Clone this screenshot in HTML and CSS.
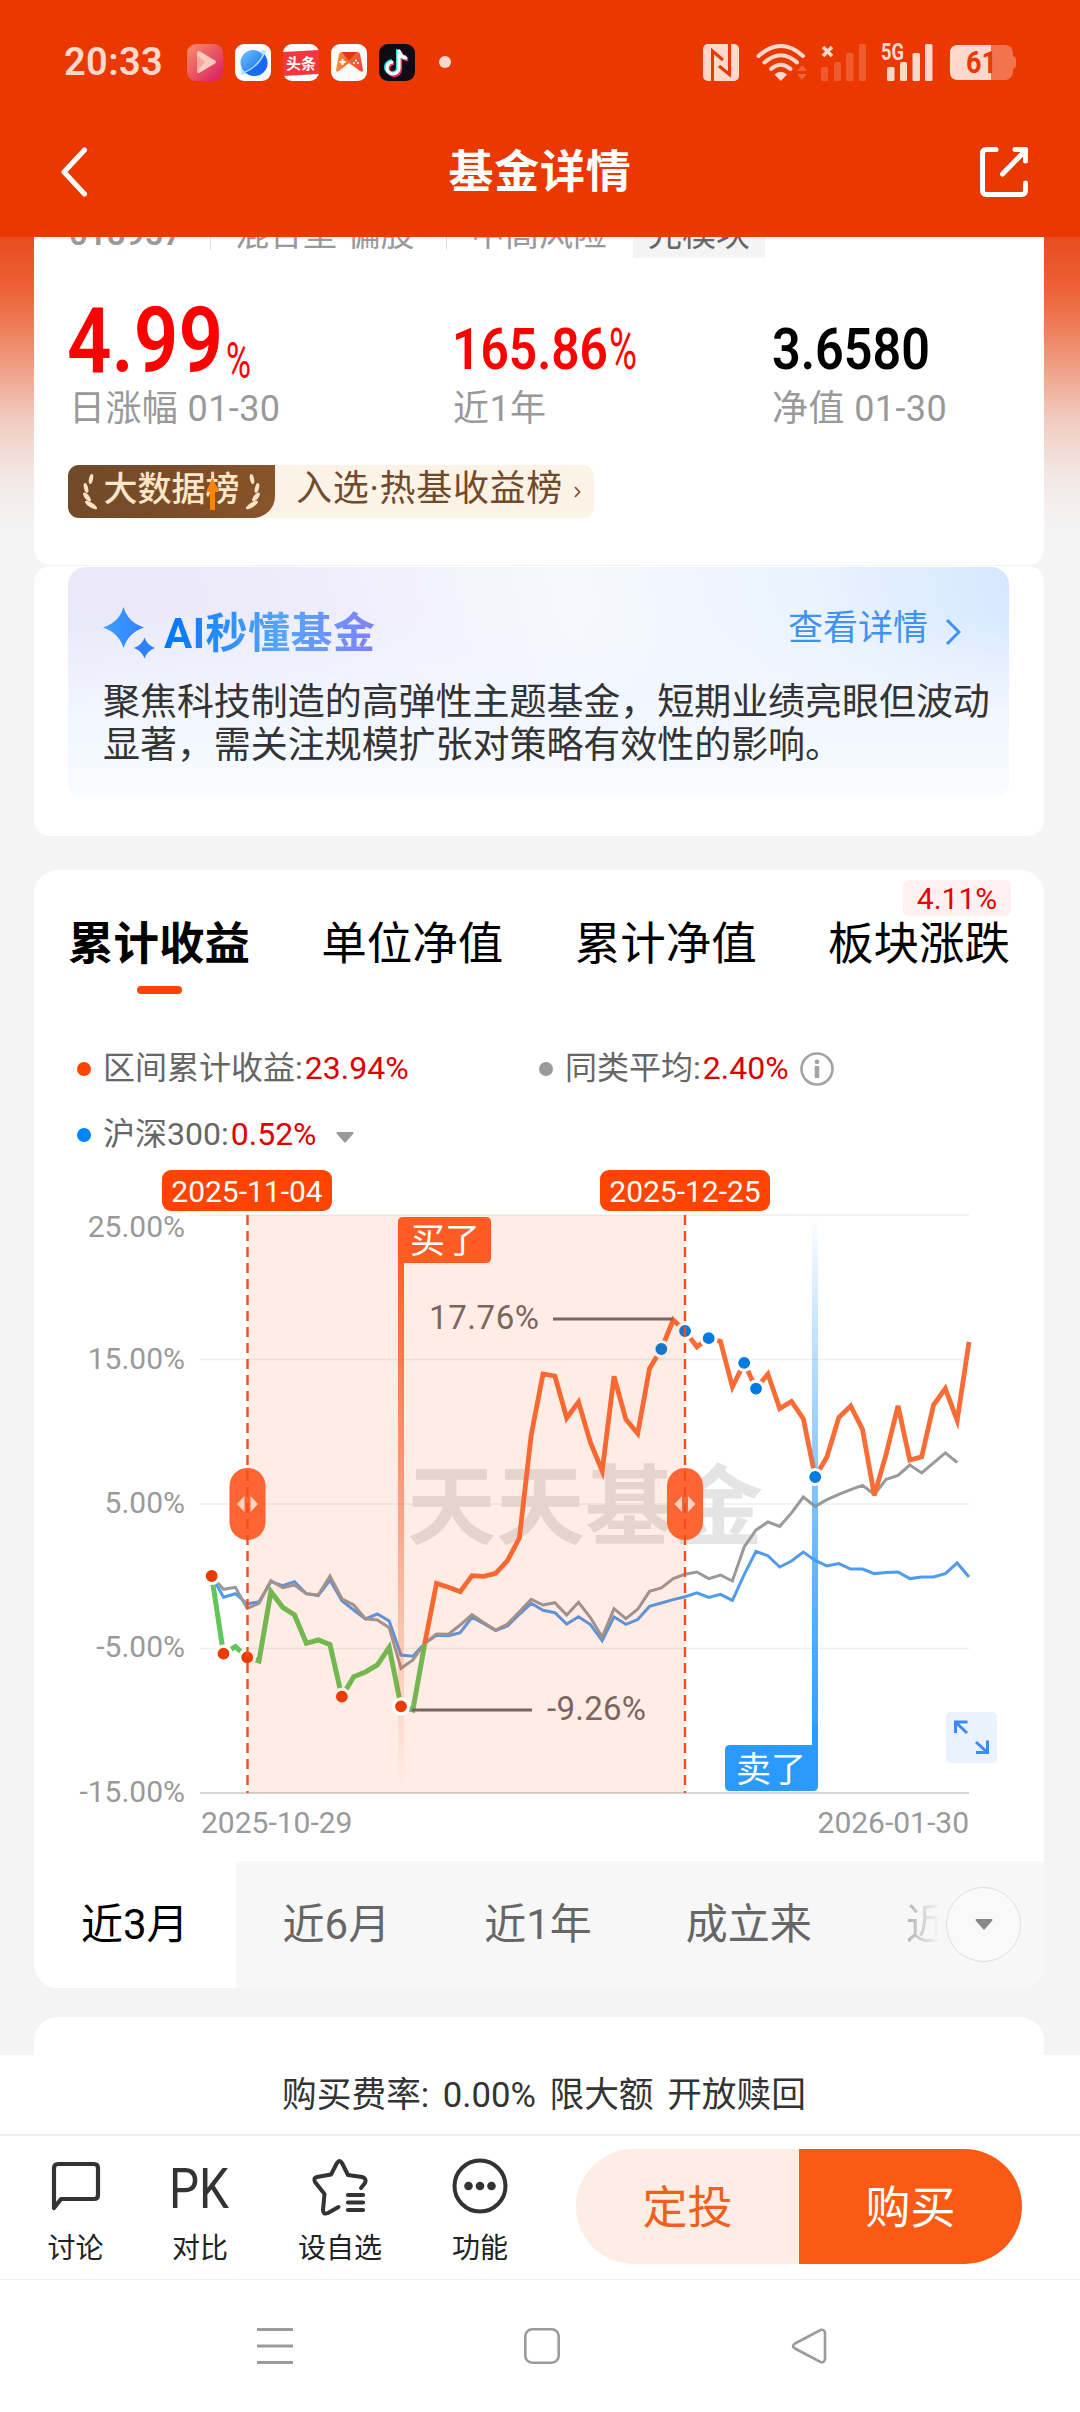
FILE: index.html
```html
<!DOCTYPE html>
<html lang="zh-CN">
<head>
  <meta charset="utf-8">
  <title>基金详情</title>
  <link rel="stylesheet" href="styles.css">
</head>
<body>
  <!-- Status bar + page title -->
  <header class="header">
    <div class="status-bar">
      <span class="clock">20:33</span>
      <div class="app-icons">
        <svg width="36" height="37" viewBox="0 0 36 37">
          <defs><linearGradient id="g-play" x1="0" y1="0" x2="1" y2="1"><stop offset="0" stop-color="#fb8f66"/><stop offset="1" stop-color="#d81b60"/></linearGradient></defs>
          <rect width="36" height="37" rx="9" fill="url(#g-play)"/>
          <path d="M10 9q0-3 3-1.500l15 9q2 1.500 0 3l-15 9q-3 1.500-3-1.500z" fill="#ffc9bd"/>
          <path d="M10 11l8 7-8 10z" fill="#f9a99c"/>
        </svg>
        <svg width="36" height="37" viewBox="0 0 36 37">
          <defs><linearGradient id="g-globe" x1="0" y1="0" x2="1" y2="1"><stop offset="0" stop-color="#6cc4ff"/><stop offset="1" stop-color="#0a63f0"/></linearGradient></defs>
          <rect width="36" height="37" rx="9" fill="#fafcff"/>
          <path d="M24 8q7-4 7 0-1 8-9 15T8 31q-3 0-2-6z" fill="#bfe2fd"/>
          <circle cx="18" cy="18.500" r="12.500" fill="url(#g-globe)"/>
          <path d="M8 29Q22 24 29 10A12.500 12.500 0 0 1 10 28z" fill="#1769f2"/>
          <path d="M8 29Q22 24 29 10" fill="none" stroke="#a8dcff" stroke-width="1.500"/>
        </svg>
        <svg width="36" height="37" viewBox="0 0 36 37">
          <rect width="36" height="37" rx="9" fill="#fff"/>
          <path d="M0 8l36-2v24l-36 2z" fill="#f7353b"/>
          <text x="18" y="25" class="toutiao" text-anchor="middle">头条</text>
        </svg>
        <svg width="36" height="37" viewBox="0 0 36 37">
          <defs><linearGradient id="g-game" x1="0" y1="0" x2="1" y2="0"><stop offset="0" stop-color="#ff8c32"/><stop offset="1" stop-color="#f0473c"/></linearGradient></defs>
          <rect width="36" height="37" rx="9" fill="#fafafa"/>
          <path d="M8 10q1-2 3-2h15q2 0 3 2l3 16q0 3-3 1l-11-8-10 8q-3 2-3-1z" fill="url(#g-game)"/>
          <path d="M11 8h15l-8 9z" fill="#dc3a0c"/>
          <path d="M8.500 18h6M11.500 15v6" stroke="#fff" stroke-width="2"/>
          <circle cx="23" cy="19" r="1" fill="#fff"/><circle cx="27" cy="19" r="1" fill="#fff"/><circle cx="25" cy="16.500" r="1" fill="#fff"/>
        </svg>
        <svg width="36" height="37" viewBox="0 0 36 37">
          <rect width="36" height="37" rx="9" fill="#0d0b16"/>
          <g fill="none" stroke-width="4">
            <path d="M20 6v18a6 6 0 1 1-6-6M20 7q2 7 8 7" stroke="#f5325c" transform="translate(1.200 1.200)"/>
            <path d="M20 6v18a6 6 0 1 1-6-6M20 7q2 7 8 7" stroke="#27e5e5" transform="translate(-1 -.8)"/>
            <path d="M20 6v18a6 6 0 1 1-6-6M20 7q2 7 8 7" stroke="#fff" stroke-width="3.200"/>
          </g>
        </svg>
      </div>
      <span class="more-dot"></span>

      <div class="status-right">
        <svg width="36" height="37" viewBox="0 0 36 37">
          <rect width="36" height="37" rx="5" fill="#fed8cc"/>
          <path d="M9.500 38V7L20 16M26.500 -1V30.500L16 22" fill="none" stroke="#ea3800" stroke-width="3"/>
        </svg>
        <svg class="wifi" width="51" height="37" viewBox="0 0 51 37">
          <g fill="none" stroke="#fed8cc" stroke-width="4" stroke-linecap="round">
            <path d="M2.500 12Q25 -8 47 12"/><path d="M8.500 18.500Q25 4 41 18.500"/><path d="M15 25Q25 16.500 34.500 25"/>
          </g>
          <path d="M18.500 30.500Q24.500 25 31 30.500L24.800 37z" fill="#fed8cc"/>
          <path d="M46 21l5 6H41zM46 36l5-6H41z" fill="#f0633c"/>
        </svg>
        <svg class="sig-one" width="46" height="37" viewBox="0 0 46 37">
          <path d="M2 3l9 9M11 3l-9 9" stroke="#fed8cc" stroke-width="3.500"/>
          <g fill="#ef5b30"><rect y="23" width="7" height="14" rx="1.500"/><rect x="13" y="18" width="7" height="19" rx="1.500"/><rect x="25" y="9" width="7.500" height="28" rx="1.500"/><rect x="38" width="7" height="37" rx="1.500"/></g>
        </svg>
        <svg class="sig-two" width="52" height="38" viewBox="0 0 52 38">
          <text x="0" y="17" class="five-g" textLength="23" lengthAdjust="spacingAndGlyphs">5G</text>
          <g fill="#fed8cc"><rect x="6" y="24" width="7.500" height="14" rx="1.500"/><rect x="19" y="19" width="7" height="19" rx="1.500"/><rect x="31.500" y="10" width="7.500" height="28" rx="1.500"/><rect x="44" y="1" width="7.500" height="37" rx="1.500"/></g>
        </svg>
        <svg width="66" height="35" viewBox="0 0 66 35">
          <rect width="63" height="35" rx="8" fill="#f2744f"/>
          <path d="M63 11q3 1 3 3v7q0 2-3 3z" fill="#f2744f"/>
          <path d="M8 0h33v35H8q-8 0-8-8V8q0-8 8-8z" fill="#fed8cc"/>
          <text x="16" y="28" class="battery-num" textLength="31" lengthAdjust="spacingAndGlyphs">61</text>
        </svg>
      </div>
    </div>

    <div class="title-bar">
      <svg width="26" height="50" viewBox="0 0 26 50"><path d="M23.500 3L3 25l20.500 22" fill="none" stroke="#fff" stroke-width="5" stroke-linecap="round" stroke-linejoin="round"/></svg>
      <h1>基金详情</h1>
      <svg width="48" height="50" viewBox="0 0 48 50">
        <path d="M16 2.500H6.500q-4 0-4 4v37q0 4 4 4h35q4 0 4-4V36M22.500 27L44 5M35 2.500h10.500V14" fill="none" stroke="#fff" stroke-width="5" stroke-linecap="round" stroke-linejoin="round"/>
      </svg>
    </div>
  </header>

  <main class="content">
    <!-- Fund summary -->
    <section class="card summary">
      <div class="tags">
        <span class="code">018957</span>
        <span class="tag">混合型-偏股</span>
        <span class="tag">中高风险</span>
        <span class="chip">光模块</span>
      </div>
      <div class="stats">
        <div class="stat">
          <svg class="num red" width="190" height="86" viewBox="0 0 190 86">
            <text class="big" x="-2" y="73" textLength="156" lengthAdjust="spacingAndGlyphs">4.99</text>
            <text class="pct" x="157" y="79" textLength="25" lengthAdjust="spacingAndGlyphs">%</text>
          </svg>
          <span>日涨幅 01-30</span>
        </div>
        <div class="stat">
          <svg class="num red" width="190" height="86" viewBox="0 0 190 86">
            <text class="mid" x="-1" y="70" textLength="156" lengthAdjust="spacingAndGlyphs">165.86</text>
            <text class="mid-pct" x="156" y="70" textLength="28" lengthAdjust="spacingAndGlyphs">%</text>
          </svg>
          <span>近1年</span>
        </div>
        <div class="stat">
          <svg class="num" width="190" height="86" viewBox="0 0 190 86">
            <text class="mid" x="0" y="70" textLength="158" lengthAdjust="spacingAndGlyphs">3.6580</text>
          </svg>
          <span>净值 01-30</span>
        </div>
      </div>
      <div class="rank">
        <div class="rank-badge">
          <svg width="16" height="36" viewBox="0 0 16 36"><g fill="#fbe3c4"><ellipse cx="9" cy="5" rx="2" ry="5" transform="rotate(12 9 5)"/><ellipse cx="4" cy="14" rx="2" ry="5" transform="rotate(-15 4 14)"/><ellipse cx="5" cy="23" rx="2.300" ry="5.500" transform="rotate(-38 5 23)"/><ellipse cx="9" cy="31" rx="2.300" ry="7" transform="rotate(-58 9 31)"/></g></svg>
          <span>大数据榜</span>
          <svg class="rank-arrow" width="13" height="32" viewBox="0 0 13 32"><path d="M6.500 0L13 14H9v18H4V14H0z" fill="#ff8400"/></svg>
          <svg class="flip" width="16" height="36" viewBox="0 0 16 36"><g fill="#fbe3c4"><ellipse cx="9" cy="5" rx="2" ry="5" transform="rotate(12 9 5)"/><ellipse cx="4" cy="14" rx="2" ry="5" transform="rotate(-15 4 14)"/><ellipse cx="5" cy="23" rx="2.300" ry="5.500" transform="rotate(-38 5 23)"/><ellipse cx="9" cy="31" rx="2.300" ry="7" transform="rotate(-58 9 31)"/></g></svg>
        </div>
        <span class="rank-text">入选·热基收益榜</span>
        <svg width="7" height="12" viewBox="0 0 7 12"><path d="M1 1l4.500 5L1 11" fill="none" stroke="#7b5433" stroke-width="1.800"/></svg>
      </div>
    </section>

    <!-- AI digest -->
    <section class="card ai-card">
      <div class="ai-panel">
        <div class="ai-head">
          <svg width="54" height="52" viewBox="0 0 54 52">
            <defs><linearGradient id="g-star"><stop offset="0" stop-color="#3fa0ff"/><stop offset="1" stop-color="#2f80ff"/></linearGradient></defs>
            <path d="M20.500 0Q25 15.500 41 20.500 25 26 20.500 41 16 26 0 20.500 16 15.500 20.500 0z" fill="url(#g-star)"/>
            <path d="M41.500 30.500Q44 38 52 41 44 44 41.500 51.500 39 44 31 41 39 38 41.500 30.500z" fill="#2f80ff"/>
          </svg>
          <h2>AI秒懂基金</h2>
          <span class="ai-link">查看详情</span>
          <svg width="16" height="28" viewBox="0 0 16 28"><path d="M2 2l12 12L2 26" fill="none" stroke="#3f92f2" stroke-width="3"/></svg>
        </div>
        <p>聚焦科技制造的高弹性主题基金，短期业绩亮眼但波动显著，需关注规模扩张对策略有效性的影响。</p>
      </div>
    </section>

    <!-- Performance chart -->
    <section class="card chart-card">
      <nav class="tabs">
        <span class="tab active">累计收益</span>
        <span class="tab">单位净值</span>
        <span class="tab">累计净值</span>
        <span class="tab">板块涨跌<em>4.11%</em></span>
      </nav>
      <div class="legend">
        <div class="legend-item wide"><i class="dot orange"></i><span>区间累计收益:<b>23.94%</b></span></div>
        <div class="legend-item"><i class="dot grey"></i><span>同类平均:<b>2.40%</b></span>
          <svg class="info" width="34" height="34" viewBox="0 0 34 34"><circle cx="17" cy="17" r="15.500" fill="none" stroke="#a3a3a3" stroke-width="2.600"/><path d="M17 14v12" stroke="#a3a3a3" stroke-width="4.500"/><circle cx="17" cy="9.800" r="2.400" fill="#a3a3a3"/></svg>
        </div>
        <div class="legend-item wide"><i class="dot blue"></i><span>沪深300:<b>0.52%</b></span>
          <svg class="caret" width="18" height="11" viewBox="0 0 18 11"><path d="M1 0h16q1 1 0 2l-7 8q-1 1-2 0L1 2Q0 1 1 0z" fill="#999"/></svg>
        </div>
      </div>

      <svg class="chart" viewBox="34 1160 1010 701">
        <defs>
          <linearGradient id="g-buy" x1="0" y1="0" x2="0" y2="1"><stop offset="0" stop-color="#ff5c24"/><stop offset="1" stop-color="#ff5c24" stop-opacity="0"/></linearGradient>
          <linearGradient id="g-sell" x1="0" y1="0" x2="0" y2="1"><stop offset="0" stop-color="#2a9afe" stop-opacity="0"/><stop offset="1" stop-color="#2a9afe"/></linearGradient>
        </defs>
        <g class="grid">
          <path d="M200 1215H969M200 1359.500H969M200 1504H969M200 1648.500H969"/>
          <path class="axis" d="M200 1793H969"/>
        </g>
        <text class="watermark" x="407" y="1538" textLength="356" lengthAdjust="spacingAndGlyphs">天天基金</text>
        <rect x="812" y="1217" width="6" height="560" fill="url(#g-sell)"/>
        <polyline id="line-index" class="line index"/>
        <polyline id="line-avg" class="line avg"/>
        <polyline id="line-loss" class="line loss"/>
        <polyline id="line-gain" class="line gain"/>
        <rect x="812" y="1217" width="6" height="560" fill="url(#g-sell)" opacity=".4"/>
        <g id="marks"></g>
        <rect x="247.500" y="1215" width="437.500" height="578" fill="#ff4400" opacity=".1"/>
        <rect x="398" y="1250" width="6" height="535" fill="url(#g-buy)"/>
        <g id="buy-mark"></g>
        <path class="callout" d="M553 1319H673M412 1710H532"/>
        <text class="peak" x="429" y="1329" textLength="110">17.76%</text>
        <text class="peak" x="547" y="1720" textLength="99">-9.26%</text>

        <path d="M403 1217h83q5 0 5 5v36q0 5-5 5h-88v-41q0-5 5-5z" fill="#ff5c24"/>
        <text class="flag" x="445" y="1253" text-anchor="middle">买了</text>
        <path d="M730 1745h82v-20h6v61q0 5-5 5h-83q-5 0-5-5v-36q0-5 5-5z" fill="#2a9afe"/>
        <text class="flag" x="771" y="1782" text-anchor="middle">卖了</text>

        <g fill="#ff6433"><rect x="229.500" y="1468" width="36" height="72" rx="18"/><rect x="667" y="1468" width="36" height="72" rx="18"/></g>
        <path d="M237 1504l7.500-8v16zM258 1504l-7.500-8v16zM674.500 1504l7.500-8v16zM695.500 1504l-7.500-8v16z" fill="#ffd3c4"/>
        <path class="range" d="M247.500 1215V1793M685 1215V1793"/>

        <g fill="#ff4400"><rect x="162" y="1170" width="170" height="41" rx="9"/><rect x="600" y="1170" width="170" height="41" rx="9"/></g>
        <text class="date-tag" x="247" y="1202" text-anchor="middle">2025-11-04</text>
        <text class="date-tag" x="685" y="1202" text-anchor="middle">2025-12-25</text>

        <g class="axis-label" text-anchor="end">
          <text x="185" y="1237">25.00%</text>
          <text x="185" y="1368.500">15.00%</text>
          <text x="185" y="1513">5.00%</text>
          <text x="185" y="1657">-5.00%</text>
          <text x="185" y="1802">-15.00%</text>
          <text x="969" y="1833">2026-01-30</text>
        </g>
        <text class="axis-label" x="201" y="1833">2025-10-29</text>

        <rect x="946" y="1712" width="51" height="51" rx="5" fill="#eaf2fe"/>
        <path d="M955.500 1733v-11h12M956 1722.500l11 10.500M976 1752.500h11.500v-12M987 1752l-11-10" fill="none" stroke="#3d8af7" stroke-width="3"/>
      </svg>

      <div class="periods">
        <span class="period active">近3月</span>
        <span class="period">近6月</span>
        <span class="period">近1年</span>
        <span class="period">成立来</span>
        <span class="period faded">近</span>
        <div class="period-more">
          <svg width="18" height="11" viewBox="0 0 18 11"><path d="M1 0h16q1 1 0 2l-7 8q-1 1-2 0L1 2Q0 1 1 0z" fill="#888"/></svg>
        </div>
      </div>
    </section>

    <section class="card next-card"></section>
  </main>

  <!-- Bottom bars -->
  <footer class="footer">
    <div class="fee">购买费率: 0.00% 限大额 开放赎回</div>
    <div class="actions">
      <div class="action talk">
        <svg width="56" height="56" viewBox="0 0 56 56"><path d="M6 48V10q0-4 4-4h36q4 0 4 4v27q0 4-4 4H13L6 50z" fill="none" stroke="#333" stroke-width="4.200" stroke-linejoin="round"/></svg>
        <span>讨论</span>
      </div>
      <div class="action pk">
        <svg width="60" height="56" viewBox="0 0 60 56"><text class="pk-text" x="-1" y="50" textLength="60" lengthAdjust="spacingAndGlyphs">PK</text></svg>
        <span>对比</span>
      </div>
      <div class="action fav">
        <svg width="58" height="56" viewBox="0 0 58 56"><path d="M27.500 49L17 55q-5 2-5-3l1.500-16L4 24q-2-4 2-5l14-2.500L26 5q2.500-4 5 0l6 12 14 2q5 1.500 3 6l-4 5" fill="none" stroke="#333" stroke-width="4" stroke-linecap="round" stroke-linejoin="round"/><path d="M37 37h15M37 44.500h15M37 52h15" stroke="#333" stroke-width="4.200" stroke-linecap="round"/></svg>
        <span>设自选</span>
      </div>
      <div class="action func">
        <svg width="56" height="56" viewBox="0 0 56 56"><circle cx="28" cy="28" r="25.500" fill="none" stroke="#333" stroke-width="4"/><g fill="#333"><circle cx="16.500" cy="28" r="4.300"/><circle cx="28" cy="28" r="4.300"/><circle cx="39.500" cy="28" r="4.300"/></g></svg>
        <span>功能</span>
      </div>
      <div class="buttons">
        <button class="btn-plan">定投</button>
        <button class="btn-buy">购买</button>
      </div>
    </div>
    <div class="sys-nav">
      <svg width="36" height="36" viewBox="0 0 36 36"><path d="M0 1.500h36M0 18h36M0 34.500h36" stroke="#9b9b9b" stroke-width="3"/></svg>
      <svg width="36" height="36" viewBox="0 0 36 36"><rect x="1.300" y="1.300" width="33.400" height="33.400" rx="7" fill="none" stroke="#9b9b9b" stroke-width="2.600"/></svg>
      <svg width="36" height="36" viewBox="0 0 36 36"><path d="M4 15.500L29.500 2q4-1 4.500 3v26q-.5 4-4.500 3L4 20.500q-4-2.500 0-5z" fill="none" stroke="#9b9b9b" stroke-width="2.600"/></svg>
    </div>
  </footer>

  <script>
    const X0 = 211.700;    // x of the first trading day
    const STEP = 11.833;   // px between trading days

    const fund = [1576, 1653.7, 1646.7, 1657.3, 1661, 1591.7, 1607.3, 1615, 1643.3, 1640, 1644.7, 1696.7, 1676.7,
      1672, 1665, 1647.3, 1706.3, 1710, 1644, 1583.3, 1587.3, 1591.7, 1575.7, 1576.3, 1573.3, 1560.7, 1538, 1435,
      1374, 1376, 1418, 1402, 1442.5, 1471, 1376.4, 1419.3, 1433.6, 1368.6, 1349, 1320, 1331, 1346.8, 1338.2,
      1341.4, 1387, 1362.9, 1388.6, 1374, 1408.6, 1401.4, 1418.6, 1477, 1456.8, 1417.5, 1406, 1429.3, 1495.4,
      1453.9, 1405.7, 1460, 1456.8, 1405, 1388.6, 1420.4, 1341.8];
    const avg = [1576, 1589.3, 1587.3, 1608.3, 1603.3, 1580.7, 1587.7, 1585, 1593.7, 1595, 1576, 1598.7, 1605,
      1618.7, 1620, 1627.7, 1668.3, 1660, 1643.3, 1634, 1634.3, 1625, 1614.7, 1622.7, 1630, 1624, 1611.7, 1599.3,
      1605, 1602.7, 1615, 1602.3, 1617.5, 1637, 1608.6, 1618.6, 1609.3, 1591.4, 1587.9, 1578.6, 1574.3, 1572,
      1578.6, 1575, 1581, 1547, 1530, 1522, 1526.4, 1512.9, 1497, 1506.4, 1499.6, 1494.3, 1489.6, 1485.4, 1494.3,
      1479.3, 1475.4, 1465, 1472.9, 1462.9, 1452.9, 1462.5];
    const index300 = [1576, 1597.3, 1593.7, 1604, 1601.7, 1581.7, 1585.7, 1581.7, 1593.7, 1595.7, 1580, 1600.7,
      1610, 1619, 1614, 1621, 1655, 1656.3, 1643.3, 1635.3, 1635.7, 1632.7, 1617.3, 1623.7, 1630.7, 1626, 1614.3,
      1603.3, 1610.3, 1612.7, 1624, 1616.7, 1624.6, 1640.7, 1616.8, 1624.3, 1619.6, 1606.4, 1603, 1599.6, 1596.8,
      1592.9, 1597.5, 1594.3, 1600.4, 1574.6, 1551.4, 1555.7, 1567, 1561, 1552, 1560.4, 1566, 1563.6, 1569, 1569,
      1573.6, 1572.5, 1572, 1578.6, 1577, 1577, 1573.6, 1563, 1577];

    function draw(id, data, from) {
      const pts = data.map((y, i) => (X0 + (i + from) * STEP).toFixed(1) + "," + y);
      document.getElementById(id).setAttribute("points", pts.join(" "));
    }

    // Trade dots: red for buys, blue for sells
    function mark(target, i, color) {
      const c = document.createElementNS("http://www.w3.org/2000/svg", "circle");
      c.setAttribute("cx", X0 + i * STEP);
      c.setAttribute("cy", fund[i]);
      c.setAttribute("r", 7.5);
      c.setAttribute("fill", color);
      c.setAttribute("class", "mark");
      document.getElementById(target).appendChild(c);
    }

    draw("line-index", index300, 0);
    draw("line-avg", avg, 0);
    draw("line-loss", fund.slice(0, 19), 0);
    draw("line-gain", fund.slice(18), 18);
    [0, 1, 3, 11].forEach(i => mark("marks", i, "#e93c00"));
    [38, 40, 42, 45, 46, 51].forEach(i => mark("marks", i, "#007be0"));
    mark("buy-mark", 16, "#e93c00");
  </script>
</body>
</html>
```

FILE: styles.css
```css
* {
  box-sizing: border-box;
}
body {
  margin: 0;
  width: 1080px;
  height: 2412px;
  overflow: hidden;
  display: flex;
  flex-direction: column;
  font-family: Roboto, "Noto Sans CJK SC", sans-serif;
  background: #f4f4f4;
  color: #333;
}
svg {
  display: block;
  flex: none;
}
h1, h2, p {
  margin: 0;
}

/* header */
.header {
  height: 237px;
  flex: none;
  background: #ea3800;
}
.status-bar {
  display: flex;
  align-items: center;
  height: 124px;
  padding: 0 64px;
}
.clock {
  width: 123px;
  font-size: 38px;
  font-weight: 600;
  letter-spacing: 0.4px;
  line-height: 40px;
  color: #fed8cc;
}
.app-icons {
  display: flex;
  gap: 12px;
}
.toutiao {
  font-size: 15px;
  font-weight: 700;
  fill: #fff;
}
.more-dot {
  width: 12px;
  height: 12px;
  margin-left: 24px;
  border-radius: 50%;
  background: #fed8cc;
}
.status-right {
  display: flex;
  align-items: center;
  margin-left: auto;
}
.wifi {
  margin-left: 17px;
}
.sig-one {
  margin-left: 14px;
}
.sig-two {
  margin: 0 17px 0 14px;
}
.five-g {
  font-size: 23px;
  font-weight: 700;
  fill: #fed8cc;
}
.battery-num {
  font-size: 31px;
  font-weight: 700;
  fill: #ea3800;
}
.title-bar {
  display: flex;
  align-items: center;
  justify-content: space-between;
  height: 95px;
  padding: 0 52px 0 61px;
}
.title-bar h1 {
  padding: 2px 0 0 13px;
  font-size: 45px;
  line-height: 60px;
  letter-spacing: 0.7px;
  color: #fff;
}

/* page body */
.content {
  height: 1818px;
  flex: none;
  overflow: hidden;
  padding: 0 36px 0 34px;
  background: linear-gradient(#e84d21 0, #ec6033 50px, #ee9070 112px, #f2cabf 180px, #f3e9e6 240px, #f4f4f4 295px);
}
.card {
  background: #fff;
  border-radius: 16px;
}
.summary {
  height: 328px;
  margin-bottom: 1px;
  border-radius: 0 0 16px 16px;
}
.tags {
  display: flex;
  align-items: flex-end;
  height: 21px;
  padding-left: 35px;
  overflow: hidden;
  font-size: 34px;
  line-height: 48px;
  color: #999;
}
.tags .code {
  width: 141px;
  font-size: 33px;
  font-weight: 600;
}
.tags .tag {
  position: relative;
  width: 236px;
  padding-left: 25px;
}
.tags .tag::before {
  content: "";
  position: absolute;
  left: 0;
  bottom: 8px;
  width: 1px;
  height: 30px;
  background: #ddd;
}
.tags .tag + .tag {
  width: 187px;
}
.tags .chip {
  padding: 0 15px;
  background: #f4f4f4;
  color: #666;
}
.stats {
  display: grid;
  grid-template-columns: 384px 319px auto;
  padding: 41px 0 0 35px;
}
.stat {
  font-size: 36px;
  line-height: 49px;
  letter-spacing: 0.4px;
  color: #999;
}
.num {
  overflow: visible;
  fill: #000;
  letter-spacing: 0;
}
.num.red {
  fill: #ff0000;
}
.big {
  font-size: 91px;
  font-weight: 600;
}
.pct {
  font-size: 50px;
}
.mid {
  font-size: 57px;
  font-weight: 600;
}
.mid-pct {
  font-size: 57px;
}
.rank {
  display: flex;
  align-items: center;
  width: 526px;
  height: 53px;
  margin: 31px 0 0 34px;
  border-radius: 11px;
  background: #fcf3e7;
}
.rank-badge {
  position: relative;
  display: flex;
  align-items: center;
  justify-content: space-between;
  width: 207px;
  height: 53px;
  padding: 0 14px;
  border-radius: 11px 0 22px 11px;
  background: linear-gradient(100deg, #714a29, #7a4c28 50%, #8a5429);
  font-size: 34px;
  font-weight: 500;
  line-height: 48px;
  color: #fde6c9;
}
.rank-badge span {
  padding-bottom: 5px;
}
.rank-arrow {
  position: absolute;
  left: 138px;
  top: 13px;
}
.flip {
  transform: scaleX(-1);
}
.rank-text {
  padding: 0 11px 5px 21px;
  font-size: 36px;
  line-height: 48px;
  letter-spacing: 0.7px;
  color: #704a2b;
}

/* AI card */
.ai-card {
  height: 270px;
  padding: 1px 35px 0 34px;
}
.ai-panel {
  height: 233px;
  padding: 36px 18px 0 35px;
  border-radius: 18px;
  background:
    linear-gradient(rgba(246, 250, 255, 0) 20%, #f1f6ff 62%, #f7fbff 95%, #fcfeff),
    linear-gradient(75deg, #e8e7f9 0, #efedfb 30%, #f6f8fd 55%, #eaf3ff 80%, #d5e7ff);
}
.ai-head {
  display: flex;
  align-items: center;
  height: 60px;
}
.ai-head h2 {
  margin: 1px auto 0 7px;
  font-size: 42px;
  line-height: 60px;
  letter-spacing: 0.5px;
  background: linear-gradient(90deg, #0075ff, #55a6fa 55%, #8080ff);
  -webkit-background-clip: text;
  background-clip: text;
  color: transparent;
}
.ai-link {
  margin: 0 17px 8px 0;
  font-size: 35px;
  line-height: 48px;
  color: #3f92f2;
}
.ai-head svg:last-child {
  margin: 0 30px 3px 0;
}
.ai-panel p {
  margin-top: 18px;
  margin-right: -8px;
  font-size: 37px;
  line-height: 43px;
  letter-spacing: -0.05px;
  color: #333;
  word-break: break-all;
}

/* chart card */
.chart-card {
  height: 1118px;
  margin-top: 34px;
  border-radius: 24px;
  overflow: hidden;
}
.tabs {
  display: flex;
  justify-content: space-between;
  height: 126px;
  padding: 45px 34px 0;
  font-size: 45.500px;
  line-height: 60px;
  color: #000;
}
.tab {
  position: relative;
}
.tab.active {
  font-weight: 700;
}
.tab.active::after {
  content: "";
  position: absolute;
  left: 69px;
  top: 71px;
  width: 45px;
  height: 8px;
  border-radius: 4px;
  background: #ff4400;
}
.tab em {
  position: absolute;
  right: -1px;
  top: -35px;
  width: 108px;
  height: 36px;
  border-radius: 6px;
  background: #fff1f1;
  color: #e60000;
  font-size: 30px;
  font-style: normal;
  line-height: 37px;
  text-align: center;
}
.legend {
  display: flex;
  flex-wrap: wrap;
  align-content: flex-start;
  height: 164px;
  padding: 40px 43px 0;
}
.legend-item {
  display: flex;
  align-items: center;
  height: 66px;
  font-size: 32px;
  line-height: 44px;
  color: #666;
}
.legend-item span {
  padding-bottom: 2px;
}
.legend-item.wide {
  width: 462px;
}
.legend-item b {
  margin-left: 2px;
  font-weight: 400;
  color: #dc0000;
}
.dot {
  width: 14px;
  height: 14px;
  margin-right: 12px;
  border-radius: 50%;
}
.dot.orange {
  background: #ff4400;
}
.dot.grey {
  background: #999;
}
.dot.blue {
  background: #0084ff;
}
.info {
  margin-left: 11px;
}
.caret {
  margin: 4px 0 0 19px;
}
.chart {
  width: 1010px;
  height: 701px;
}
.grid path {
  fill: none;
  stroke: #eee;
  stroke-width: 1.5;
}
.grid .axis {
  stroke: #d5d5d5;
  stroke-width: 2;
}
.watermark {
  font-size: 87px;
  font-weight: 700;
  fill: #e4e4e4;
}
.line {
  fill: none;
  stroke-width: 3;
}
.line.index {
  stroke: #4f9bf0;
}
.line.avg {
  stroke: #999;
}
.line.loss {
  stroke: #62c55a;
  stroke-width: 5;
}
.line.gain {
  stroke: #f96c36;
  stroke-width: 4.8;
}
.mark {
  stroke: #fff;
  stroke-width: 3.2;
}
.callout {
  stroke: #7a655f;
  stroke-width: 3;
}
.peak {
  font-size: 33px;
  fill: #7a655f;
}
.flag {
  font-size: 35px;
  fill: #fff;
}
.range {
  stroke: #f0501c;
  stroke-width: 2.4;
  stroke-dasharray: 10 6;
}
.date-tag {
  font-size: 30px;
  fill: #fff;
}
.axis-label {
  font-size: 30px;
  fill: #999;
}
.periods {
  position: relative;
  display: flex;
  height: 127px;
  background: #f7f7f7;
}
.period {
  padding: 0 47px;
  font-size: 42px;
  line-height: 127px;
  color: #666;
}
.period.active {
  background: #fff;
  color: #000;
}
.period.faded {
  width: 86px;
  padding-right: 0;
  overflow: hidden;
  color: transparent;
  background: linear-gradient(90deg, #aaa 50%, #f7f7f7 95%);
  -webkit-background-clip: text;
  background-clip: text;
}
.period-more {
  position: absolute;
  right: 23px;
  top: 26px;
  display: flex;
  align-items: center;
  justify-content: center;
  width: 75px;
  height: 75px;
  border: 1.5px solid #dedede;
  border-radius: 50%;
  background: #f9f9f9;
}
.next-card {
  height: 60px;
  margin-top: 29px;
  border-radius: 24px 24px 0 0;
}

/* footer */
.footer {
  flex: 1;
  background: #fff;
}
.fee {
  height: 81px;
  padding-left: 8px;
  border-bottom: 2px solid #eee;
  font-size: 34.700px;
  line-height: 80px;
  text-align: center;
  word-spacing: 5px;
  color: #333;
}
.actions {
  display: flex;
  height: 144px;
  padding: 22px 58px 0 30px;
  border-bottom: 1px solid #eee;
}
.action {
  display: flex;
  flex-direction: column;
  align-items: center;
  font-size: 28px;
  line-height: 42px;
  color: #222;
}
.action span {
  margin-top: 14px;
}
.action svg {
  overflow: visible;
}
.talk {
  width: 91px;
}
.pk {
  width: 158px;
}
.fav {
  width: 122px;
}
.func {
  width: 158px;
}
.pk-text {
  font-size: 56px;
  fill: #333;
}
.buttons {
  display: flex;
  margin: -9px 0 0 auto;
  width: 446px;
  height: 115px;
  border-radius: 58px;
  overflow: hidden;
}
.buttons button {
  flex: 1;
  padding: 0 0 5px;
  border: 0;
  font-family: inherit;
  font-size: 45px;
}
.btn-plan {
  background: #fdede5;
  color: #f25e1c;
}
.btn-buy {
  background: #fb5a14;
  color: #fff;
}
.sys-nav {
  display: flex;
  gap: 231px;
  padding: 48px 0 0 257px;
}
```
